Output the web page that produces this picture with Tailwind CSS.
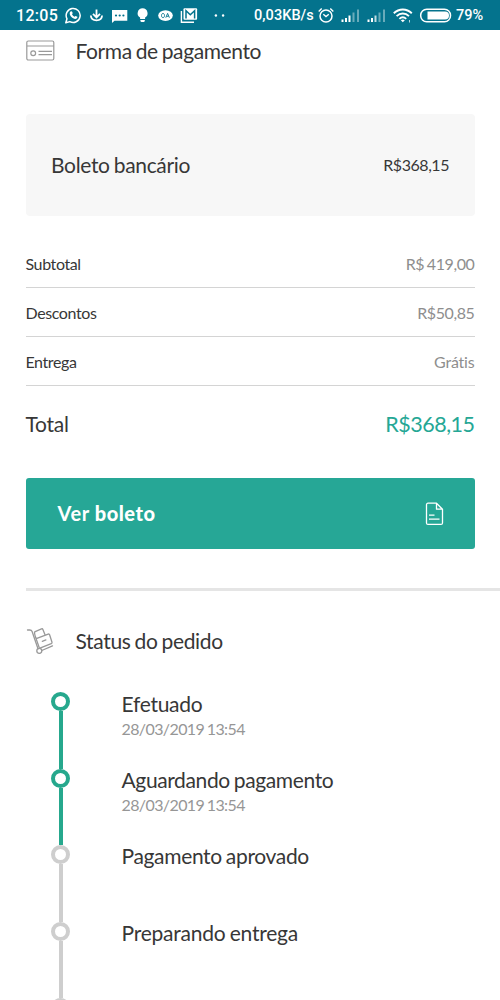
<!DOCTYPE html>
<html lang="pt-BR">
<head>
<meta charset="utf-8">
<title>Status do pedido</title>
<script src="https://cdn.jsdelivr.net/npm/@tailwindcss/browser@4"></script>
</head>
<body class="bg-white">
<div class="w-[500px] h-[1000px] overflow-hidden bg-white text-[#373737] font-['Lato',sans-serif] flex flex-col">

  <header class="h-[30px] shrink-0 bg-[#04738d] text-white font-['Roboto',sans-serif] font-medium flex items-center pl-4">
    <span class="w-[49px] shrink-0 text-[16px] tracking-[0.3px] whitespace-nowrap pt-px">12:05</span>
    <svg class="shrink-0" width="163" height="30" viewBox="65 0 163 30" fill="none" stroke="#fff">
      <path d="M65.8 22.8l1.2-4a7 7 0 1 1 2.8 2.8z" stroke-width="1.5" stroke-linejoin="round"/>
      <path d="M70.6 11.5c.7-.6 1.4-.3 1.7.6l.4 1.2-.7 1c.6 1.2 1.4 1.9 2.5 2.4l1-.8 1.9.9c.1 1.3-.9 2.1-2.1 2.1-2.8-.3-5.5-3.2-5.6-5.5 0-.8.3-1.4.9-1.9z" fill="#fff" stroke="none"/>
      <path d="M96.500 9.500v7.500M93 13.800l3.500 3.700 3.500-3.700M90.800 15.500c.2 3 2.700 4.800 5.700 4.800s5.400-1.800 5.600-4.800" stroke-width="1.8"/>
      <path d="M112 10h15.300v10.700H114.500L112 23z" fill="#fff" stroke="none"/>
      <g fill="#04738d" stroke="none"><circle cx="116" cy="15.500" r="1.100"/><circle cx="119.700" cy="15.500" r="1.100"/><circle cx="123.400" cy="15.500" r="1.100"/></g>
      <path d="M142.600 8.300a5 5 0 0 0-2.500 9.300v1.400h5v-1.400a5 5 0 0 0-2.500-9.300zM140.400 20h4.400v1.200l-1 .9h-2.400l-1-.9z" fill="#fff" stroke="none"/>
      <ellipse cx="165.500" cy="15.600" rx="7.300" ry="5.300" fill="#fff" stroke="none"/>
      <path d="M163 13.400c2 0 2 4.300 0 4.300s-2-4.300 0-4.300M165.800 17.700l1.800-4.300 1.800 4.300M166.600 16.300h2" stroke="#04738d" stroke-width=".9"/>
      <path d="M181.400 11v11.200H194" stroke-width="1.400"/>
      <rect x="183.500" y="8.200" width="13.600" height="11.600" rx="1" fill="#fff" stroke="none"/>
      <path d="M186 18.500V10.800l4.300 4 4.300-4v7.700" stroke="#04738d" stroke-width="1.500"/>
      <g fill="#fff" stroke="none"><circle cx="215.900" cy="15.500" r="1.200"/><circle cx="223.100" cy="15.500" r="1.200"/></g>
    </svg>
    <span class="w-[62px] ml-[26px] shrink-0 text-[14.500px] tracking-[0.05px] whitespace-nowrap pt-px">0,03KB/s</span>
    <svg class="shrink-0" width="138" height="30" viewBox="316 0 138 30" fill="none" stroke="#fff">
      <circle cx="326" cy="16" r="6" stroke-width="1.500"/>
      <path d="M318.700 11.500l3-2.900M333.300 11.500l-3-2.900M323.300 14.300l2.700 2.300 2.800-2.300" stroke-width="1.400"/>
      <g stroke-width="2">
        <path d="M342.500 19.500V22M346 18v4M349.500 15.500V22"/><path d="M353.500 12.500V22M358 9.500V22" opacity=".4"/>
        <path d="M368.500 19.500V22M372 18v4"/><path d="M375.500 15.500V22" opacity=".75"/><path d="M379.500 12.500V22M384 9.500V22" opacity=".4"/>
      </g>
      <path d="M393.800 13.300c5.200-5.100 12.800-5.100 18 0M396.600 16.100c3.600-3.500 8.800-3.500 12.400 0M399.400 18.900c2-1.900 4.800-1.900 6.800 0" stroke-width="1.900"/>
      <path d="M400.800 20.200q2-1.500 4 0l-2 2.100z" fill="#fff" stroke="none"/>
      <path d="M409.500 20v2.500" stroke-width="1" opacity=".7"/>
      <rect x="420.700" y="9.200" width="29.800" height="12.600" rx="6" stroke-width="1.500"/>
      <path d="M427.500 11.500H445a4 4 0 0 1 0 8H427.500z" fill="#fff" stroke="none"/>
    </svg>
    <span class="ml-[2px] text-[14.500px] whitespace-nowrap pt-px">79%</span>
  </header>

  <main class="pl-[25.500px] flex flex-col">
    <section class="pr-[25.500px] flex flex-col">
      <h2 class="h-[42px] flex items-center text-[21px] tracking-[-0.4px] [word-spacing:-1px]">
        <svg class="w-[30px] h-[22px] mr-[20px] shrink-0" viewBox="0 0 30 22" fill="none" stroke="#999" stroke-width="1.200">
          <rect x=".8" y="1" width="27" height="19" rx="1.500"/><path d="M1 6h27M12.500 11.300h13.500M12.500 14.700h13.500"/><circle cx="7.200" cy="13.200" r="2.400"/>
        </svg>
        <span class="pb-px">Forma de pagamento</span>
      </h2>
      <div class="mt-[42px] h-[102px] rounded-[4px] bg-[#f7f7f7] px-[25.500px] flex items-center justify-between">
        <span class="text-[21px] tracking-[-0.33px] [word-spacing:-1px]">Boleto bancário</span>
        <span class="text-[16px] tracking-[-0.45px]">R$368,15</span>
      </div>
      <dl class="mt-[24px] text-[16px] tracking-[-0.4px] [word-spacing:-1px]">
        <div class="h-[48px] border-b border-[#d4d4d4] flex items-center justify-between"><dt>Subtotal</dt><dd class="text-[#8e8e8e]">R$ 419,00</dd></div>
        <div class="h-[49px] pt-px border-b border-[#d4d4d4] flex items-center justify-between"><dt>Descontos</dt><dd class="text-[#8e8e8e]">R$50,85</dd></div>
        <div class="h-[49px] pt-px border-b border-[#d4d4d4] flex items-center justify-between"><dt>Entrega</dt><dd class="text-[#8e8e8e] tracking-[-0.2px]">Grátis</dd></div>
      </dl>
      <div class="mt-[18px] h-[40px] flex items-center justify-between text-[21px]">
        <span class="tracking-[-0.25px] pb-px">Total</span><span class="text-[#25a795] text-[21.500px] tracking-[-0.5px]">R$368,15</span>
      </div>
      <button class="mt-[34px] h-[71px] rounded-[3px] bg-[#26a796] text-white pl-[32px] pr-[31px] flex items-center justify-between">
        <span class="font-bold text-[20px] tracking-[0.6px] pb-px">Ver <b class="font-black tracking-[0.5px]">boleto</b></span>
        <svg class="w-[19px] h-[24px]" viewBox="0 0 19 24" fill="none" stroke="#fff" stroke-width="1.300" stroke-linejoin="round">
          <path d="M11.500 1.200H3a1.500 1.500 0 0 0-1.500 1.500v18.200a1.500 1.500 0 0 0 1.500 1.500h13a1.500 1.500 0 0 0 1.500-1.500V7.200zM11.500 1.200v6h6M4 13.200h5.500M4 17.200h10.500"/>
        </svg>
      </button>
    </section>

    <hr class="mt-[39px] border-0 h-[3px] bg-[#e5e5e5]">

    <section>
      <h2 class="mt-[30px] h-[40px] flex items-center text-[21px] tracking-[-0.35px] [word-spacing:-1px]">
        <svg class="w-[30px] h-[30px] mr-[20px] shrink-0" viewBox="0 0 30 30" fill="none" stroke="#999" stroke-width="1.300" stroke-linejoin="round" stroke-linecap="round">
          <path d="M1.500 4h2.300q1.700 0 2.300 1.500l5.900 17.300M15.800 24.500l10.700-4.700"/><circle cx="13.300" cy="24.800" r="2.500"/>
          <path d="M9 9.500l1.200 3.500 2.900 8.200q.4 1 1.400.6l10.800-4.200q1-.4.7-1.400l-2.400-7.500q-.4-1-1.400-.6l-12 4.500M9 9.500l-.5-2.600q-.2-.9.700-1.300l6.300-2.700q1-.4 1.400.5l2 5.200M16.300 15.300l3.600-1.400"/>
        </svg>
        <span class="pb-px">Status do pedido</span>
      </h2>
      <ol class="mt-[31px] pl-[25.500px]">
        <li class="h-[76.500px] flex">
          <div class="w-[19px] flex flex-col items-center"><i class="size-[19px] shrink-0 rounded-full border-4 border-[#26a88d]"></i><i class="w-1 grow bg-[#26a88d]"></i></div>
          <div class="ml-[51.500px]"><p class="text-[21px] leading-[23px] tracking-[-0.27px]">Efetuado</p><p class="mt-[3px] text-[16px] leading-[22px] tracking-[-0.6px] [word-spacing:-1px] text-[#969696]">28/03/2019 13:54</p></div>
        </li>
        <li class="h-[76.500px] flex">
          <div class="w-[19px] flex flex-col items-center"><i class="size-[19px] shrink-0 rounded-full border-4 border-[#26a88d]"></i><i class="w-1 grow bg-[#26a88d]"></i></div>
          <div class="ml-[51.500px]"><p class="text-[21px] leading-[22px] tracking-[-0.38px] [word-spacing:-1px]">Aguardando pagamento</p><p class="mt-[3px] text-[16px] leading-[22px] tracking-[-0.6px] [word-spacing:-1px] text-[#969696]">28/03/2019 13:54</p></div>
        </li>
        <li class="h-[76.500px] flex">
          <div class="w-[19px] flex flex-col items-center"><i class="size-[19px] shrink-0 rounded-full border-4 border-[#cecece]"></i><i class="w-1 grow bg-[#cecece]"></i></div>
          <p class="ml-[51.500px] text-[21px] leading-[22px] tracking-[-0.34px] [word-spacing:-1px]">Pagamento aprovado</p>
        </li>
        <li class="h-[76.500px] flex">
          <div class="w-[19px] flex flex-col items-center"><i class="size-[19px] shrink-0 rounded-full border-4 border-[#cecece]"></i><i class="w-1 grow bg-[#cecece]"></i></div>
          <p class="ml-[51.500px] text-[21px] leading-[22px] tracking-[-0.22px] [word-spacing:-1px]">Preparando entrega</p>
        </li>
        <li class="flex"><i class="size-[19px] shrink-0 rounded-full border-4 border-[#cecece]"></i></li>
      </ol>
    </section>
  </main>
</div>
</body>
</html>
